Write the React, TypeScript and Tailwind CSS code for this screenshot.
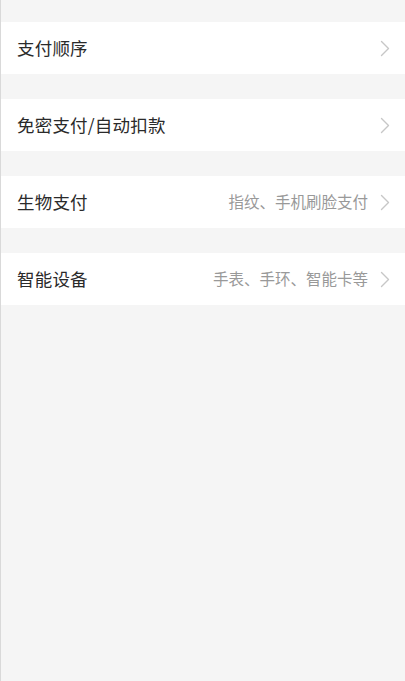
import React from 'react'

const rows: { title: string; hint?: string }[] = [
  { title: '支付顺序' },
  { title: '免密支付/自动扣款' },
  { title: '生物支付', hint: '指纹、手机刷脸支付' },
  { title: '智能设备', hint: '手表、手环、智能卡等' },
]

function Chevron() {
  return (
    <svg width="10" height="17" viewBox="0 0 10 17" fill="none" className="shrink-0">
      <path d="M1.5 1.5 L8.5 8.5 L1.5 15.5" stroke="#c7c7c7" strokeWidth="1.4" strokeLinecap="round" strokeLinejoin="round" />
    </svg>
  )
}

export default function App() {
  return (
    <div
      className="min-h-[681px] bg-[#f5f5f5] border-l border-[#d9d9d9] pt-[22px] flex flex-col gap-[25px]"
      style={{ fontFamily: '"Noto Sans CJK SC", "Noto Sans", sans-serif' }}
    >
      {rows.map(row => (
        <div key={row.title} className="h-[52px] bg-white flex items-center pl-4 pr-[15px]">
          <span className="flex-1 text-[17.5px] tracking-[0.2px] text-[#2a2a2a]">{row.title}</span>
          {row.hint && <span className="text-[15.5px] text-[#999999] mr-3">{row.hint}</span>}
          <Chevron />
        </div>
      ))}
    </div>
  )
}
